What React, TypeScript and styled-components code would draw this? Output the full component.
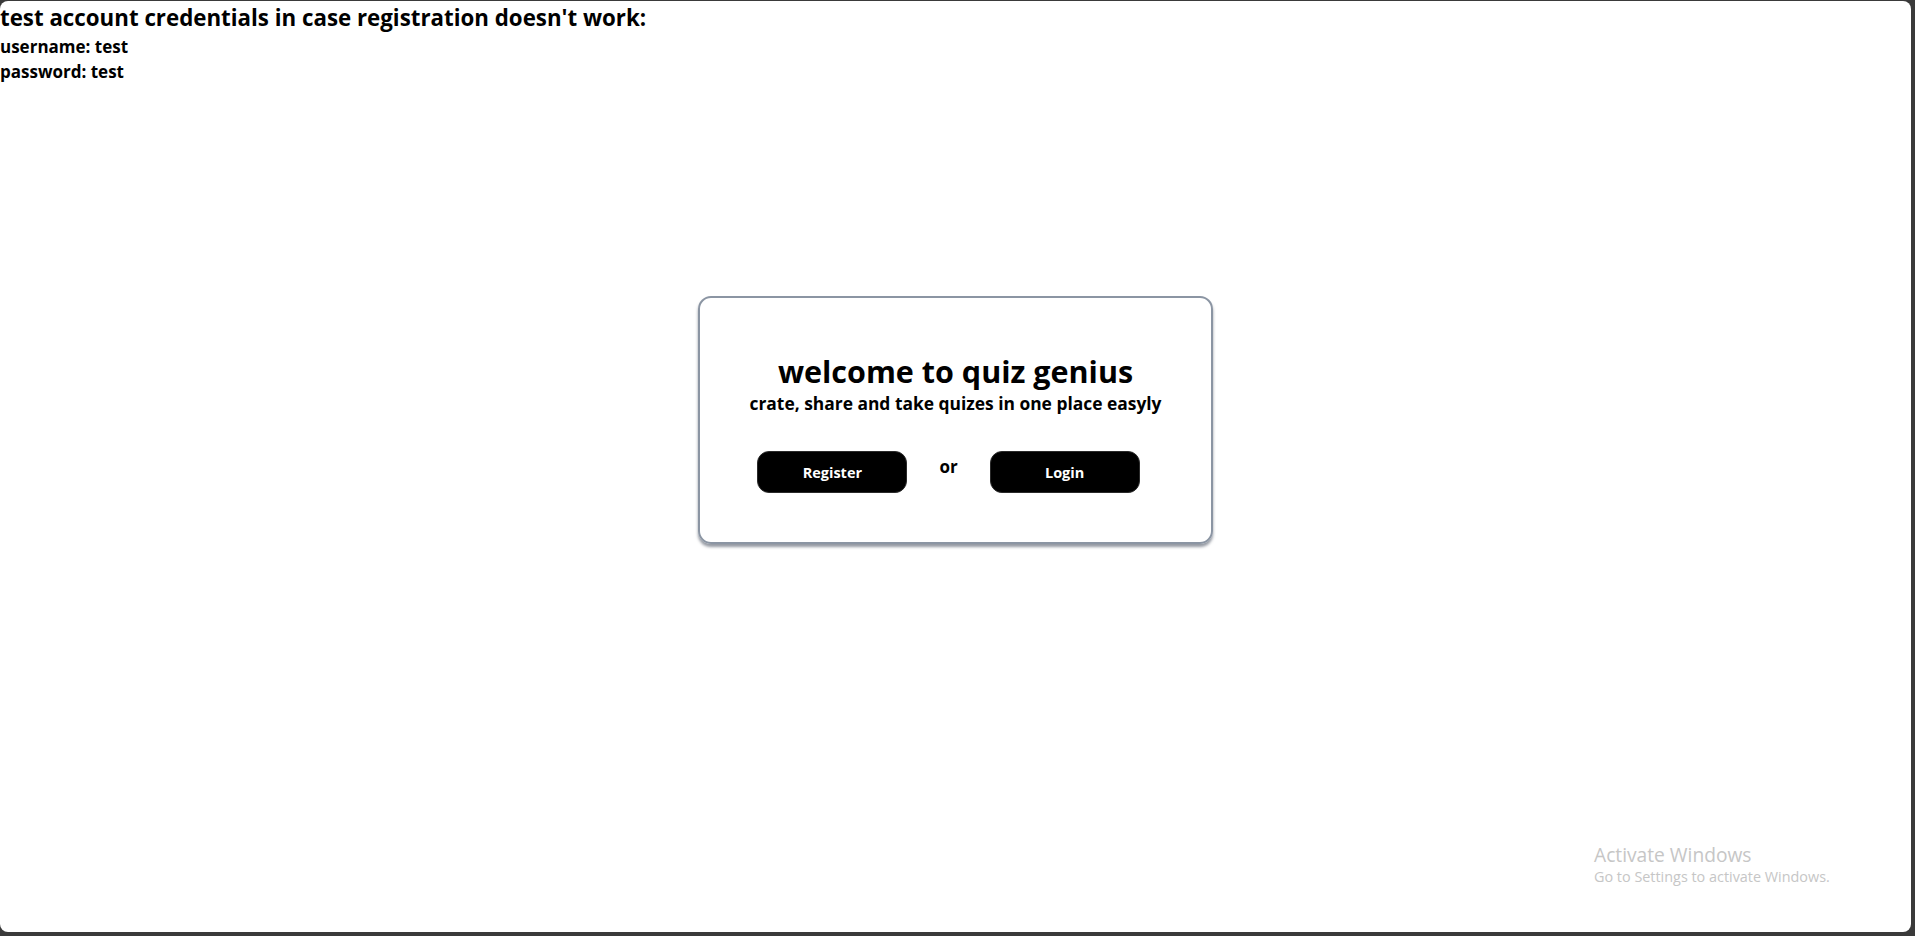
import React from "react";
import styled, { createGlobalStyle } from "styled-components";

const GlobalStyle = createGlobalStyle`
  html, body {
    margin: 0;
    padding: 0;
    height: 100%;
    background: #3a3a3a;
  }
  body {
    font-family: "Open Sans", "Noto Sans", "DejaVu Sans", sans-serif;
    color: #000;
  }
  #root {
    height: 100%;
  }
`;

const Frame = styled.div`
  box-sizing: border-box;
  height: 100vh;
  padding: 1px 4px 4px 0;
  display: flex;
`;

const Screen = styled.div`
  position: relative;
  flex: 1;
  background: #fff;
  border-radius: 8px;
  overflow: hidden;
  display: flex;
  flex-direction: column;
`;

const Notice = styled.div`
  display: flex;
  flex-direction: column;
`;

const NoticeTitle = styled.h2`
  margin: 0;
  font-size: 22.3px;
  line-height: 33px;
  font-weight: 700;
`;

const NoticeLine = styled.h3`
  margin: 0;
  font-size: 17px;
  line-height: 25px;
  font-weight: 700;
`;

const Stage = styled.main`
  display: flex;
  justify-content: center;
  padding-top: 212px;
`;

const Card = styled.section`
  box-sizing: border-box;
  width: 515px;
  height: 248px;
  border: 2px solid #8b95a3;
  border-radius: 13px;
  box-shadow: 0 3px 3px rgba(60, 70, 85, 0.55);
  display: flex;
  flex-direction: column;
  align-items: center;
  padding-top: 52px;
`;

const Title = styled.h1`
  margin: 0;
  font-size: 30.5px;
  line-height: 42px;
  font-weight: 700;
`;

const Subtitle = styled.p`
  margin: 0;
  font-size: 17.4px;
  line-height: 23px;
  font-weight: 700;
`;

const Actions = styled.div`
  display: flex;
  align-items: flex-start;
  gap: 32px;
  margin-top: 36px;
  margin-right: 14px;
`;

const Or = styled.span`
  font-size: 17px;
  font-weight: 700;
  line-height: 24px;
  margin-top: 4px;
`;

const ActionButton = styled.button`
  box-sizing: border-box;
  width: 150px;
  height: 42px;
  border: 1.5px solid #2a2a2a;
  border-radius: 12px;
  background: #000;
  color: #fff;
  font-family: "Open Sans", "Noto Sans", sans-serif;
  font-size: 14.5px;
  font-weight: 700;
  cursor: pointer;
`;

const Watermark = styled.div`
  position: absolute;
  left: 1594px;
  top: 842px;
  color: #c6c6c6;
  font-family: "Open Sans", "Noto Sans", sans-serif;
  pointer-events: none;
`;

const WatermarkTitle = styled.div`
  font-size: 19.2px;
  line-height: 24px;
`;

const WatermarkText = styled.div`
  font-size: 14.4px;
  line-height: 19px;
`;

export default function App() {
  return (
    <>
      <GlobalStyle />
      <Frame>
        <Screen>
          <Notice>
            <NoticeTitle>test account credentials in case registration doesn't work:</NoticeTitle>
            <NoticeLine>username: test</NoticeLine>
            <NoticeLine>password: test</NoticeLine>
          </Notice>
          <Stage>
            <Card>
              <Title>welcome to quiz genius</Title>
              <Subtitle>crate, share and take quizes in one place easyly</Subtitle>
              <Actions>
                <ActionButton>Register</ActionButton>
                <Or>or</Or>
                <ActionButton>Login</ActionButton>
              </Actions>
            </Card>
          </Stage>
          <Watermark>
            <WatermarkTitle>Activate Windows</WatermarkTitle>
            <WatermarkText>Go to Settings to activate Windows.</WatermarkText>
          </Watermark>
        </Screen>
      </Frame>
    </>
  );
}
